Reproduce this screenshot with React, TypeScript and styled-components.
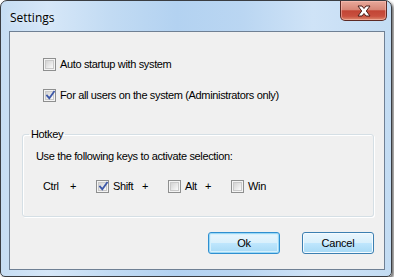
import styled, { createGlobalStyle } from 'styled-components';

const GlobalStyle = createGlobalStyle`
    html, body {
        margin: 0;
        padding: 0;
        background: #ffffff;
    }
    body {
        font-family: "Liberation Sans", Arial, sans-serif;
        font-size: 11px;
        letter-spacing: -0.35px;
        color: #000;
    }
`

const StyledWindow = styled.div`
    width: 392px;
    height: 277px;
    box-sizing: border-box;
    border: 1px solid #3a3d42;
    border-radius: 7px 7px 5px 5px;
    background: linear-gradient(90deg, #c6ddf3 0%, #d6e7f8 12%, #c2dbf3 28%, #b3d2f1 45%, #bad6f2 62%, #cfe3f7 80%, #c3dcf3 100%);
    box-shadow: 2px 2px 3px rgba(0, 0, 0, 0.55);
    display: flex;
    flex-direction: column;
    padding: 0 6px 6px 8px;
`

const StyledTitleBar = styled.div`
    height: 30px;
    display: flex;
    justify-content: space-between;
    align-items: flex-start;
`

const StyledTitle = styled.span`
    font-family: "Open Sans", "Noto Sans", sans-serif;
    font-size: 12px;
    letter-spacing: 0;
    padding: 8px 0 0 1px;
    color: #000;
    text-shadow: 0 0 6px rgba(255, 255, 255, 0.9);
`

const StyledClose = styled.div`
    width: 47px;
    height: 20px;
    margin-right: -2px;
    box-sizing: border-box;
    border: 1px solid #5c2a25;
    border-top: none;
    border-radius: 0 0 5px 5px;
    background: linear-gradient(180deg, #e8a99b 0%, #d88777 45%, #c24535 52%, #c9503f 80%, #dd8a6f 100%);
    box-shadow: inset 0 0 0 1px rgba(255, 200, 190, 0.5);
    display: flex;
    align-items: center;
    justify-content: center;
`

const StyledClient = styled.div`
    flex: 1;
    border: 1px solid #6f8094;
    background: #f0f0f0;
    display: flex;
    flex-direction: column;
`

const StyledOptions = styled.div`
    display: flex;
    flex-direction: column;
    gap: 18px;
    padding: 26px 0 0 33px;
`

const StyledCheckRow = styled.label`
    display: flex;
    align-items: center;
    gap: 4px;
    height: 13px;
    line-height: 13px;
`

const StyledBox = styled.span`
    width: 13px;
    height: 13px;
    box-sizing: border-box;
    border: 1px solid #8e8f8f;
    background: #f4f4f4;
    padding: 1px;
    display: inline-flex;
    flex-shrink: 0;
`

const StyledBoxInner = styled.span`
    flex: 1;
    position: relative;
    border: 1px solid #c9c9c9;
    background: linear-gradient(135deg, #d3d3d3 0%, #e6e6e6 50%, #fbfbfb 100%);
`

const StyledTick = styled.svg`
    position: absolute;
    left: -1px;
    top: -2px;
`

const StyledGroup = styled.fieldset`
    margin: 26px 10px 0 12px;
    padding: 0 0 23px 13px;
    border: 1px solid #d5dfe5;
    border-radius: 3px;
    box-shadow: inset 1px 1px 0 #ffffff, 1px 1px 0 #ffffff;
`

const StyledLegend = styled.legend`
    margin-left: -7px;
    padding: 0 2px;
    line-height: 13px;
`

const StyledHint = styled.div`
    margin-top: 9px;
    line-height: 13px;
`

const StyledKeyRow = styled.div`
    display: grid;
    grid-template-columns: 27px 26px 46px 26px 37px 26px auto;
    align-items: center;
    margin: 17px 0 0 7px;
    height: 13px;
    line-height: 13px;
`

const StyledPlus = styled.span`
    padding-left: 0;
`

const StyledButtons = styled.div`
    display: flex;
    justify-content: flex-end;
    gap: 22px;
    margin: 15px 10px 0 0;
`

const StyledButton = styled.button<{ $default?: boolean }>`
    width: 72px;
    height: 22px;
    box-sizing: border-box;
    border: 1px solid ${p => p.$default ? '#2f8fd0' : '#3c7fb1'};
    border-radius: 3px;
    font-family: "Liberation Sans", Arial, sans-serif;
    font-size: 11px;
    letter-spacing: -0.2px;
    color: #000;
    padding: 0;
    background: linear-gradient(180deg, #eaf6fd 0%, #d9f0fc 48%, #bee6fd 52%, #a7d9f5 100%);
    box-shadow: ${p => p.$default
        ? 'inset 0 0 0 1px #9ad8f6, inset 0 0 0 2px #d6f0fc'
        : 'inset 0 0 0 1px #f4fbff'};
`

const Check = ({ checked, children }: { checked?: boolean; children?: React.ReactNode }) => (
    <StyledCheckRow>
        <StyledBox>
            <StyledBoxInner>
                {checked && (
                    <StyledTick width="11" height="11" viewBox="0 0 11 11">
                        <path d="M2 5.5 L4.3 8.2 L9 1.8" fill="none" stroke="#3d58a8" strokeWidth="1.8" strokeLinecap="square" />
                    </StyledTick>
                )}
            </StyledBoxInner>
        </StyledBox>
        {children && <span>{children}</span>}
    </StyledCheckRow>
)

export default function App() {
    return (
        <>
            <GlobalStyle />
            <StyledWindow>
                <StyledTitleBar>
                    <StyledTitle>Settings</StyledTitle>
                    <StyledClose>
                        <svg width="16" height="12" viewBox="0 0 16 12">
                            <path d="M2 1 H6 L8 3.5 L10 1 H14 L10.3 6 L14 11 H10 L8 8.5 L6 11 H2 L5.7 6 Z"
                                fill="#ffffff" stroke="#4a1d18" strokeWidth="1" strokeLinejoin="round" />
                        </svg>
                    </StyledClose>
                </StyledTitleBar>
                <StyledClient>
                    <StyledOptions>
                        <Check>Auto startup with system</Check>
                        <Check checked>For all users on the system (Administrators only)</Check>
                    </StyledOptions>
                    <StyledGroup>
                        <StyledLegend>Hotkey</StyledLegend>
                        <StyledHint>Use the following keys to activate selection:</StyledHint>
                        <StyledKeyRow>
                            <span>Ctrl</span>
                            <StyledPlus>+</StyledPlus>
                            <Check checked>Shift</Check>
                            <StyledPlus>+</StyledPlus>
                            <Check>Alt</Check>
                            <StyledPlus>+</StyledPlus>
                            <Check>Win</Check>
                        </StyledKeyRow>
                    </StyledGroup>
                    <StyledButtons>
                        <StyledButton $default>Ok</StyledButton>
                        <StyledButton>Cancel</StyledButton>
                    </StyledButtons>
                </StyledClient>
            </StyledWindow>
        </>
    )
}
